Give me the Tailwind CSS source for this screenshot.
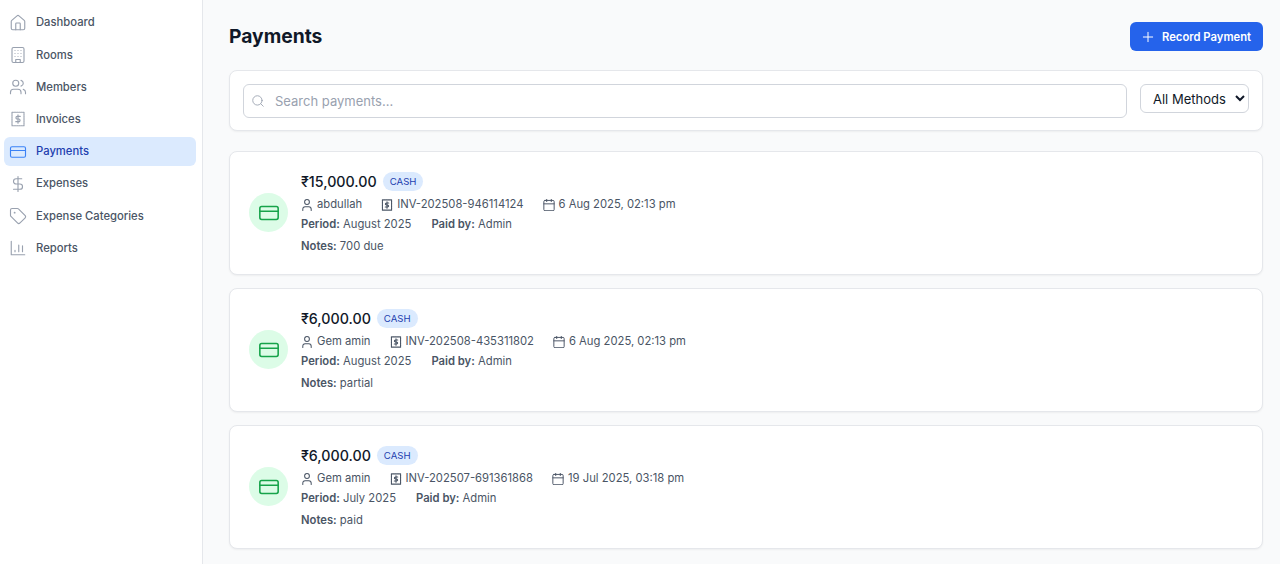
<!DOCTYPE html>
<html lang="en">
<head>
  <meta charset="UTF-8" />
  <title>Payments</title>
  <script src="https://cdn.jsdelivr.net/npm/@tailwindcss/browser@4"></script>
</head>
<body class="bg-[#f9fafb] font-['Inter',sans-serif] text-gray-900">
  <div class="flex h-[564px] overflow-hidden">
    <!-- Sidebar -->
    <aside class="w-[203px] shrink-0 bg-white border-r border-gray-200 pt-[8.4px] pl-1 pr-[6px]">
      <nav class="flex flex-col gap-[3.2px] text-[11.25px] font-medium text-gray-600">
        <a class="h-[29px] flex items-center gap-[9px] px-[5px] rounded-md">
          <svg class="w-[18px] h-[18px] text-gray-400" fill="none" stroke="currentColor" stroke-width="1.5" stroke-linecap="round" stroke-linejoin="round" viewBox="0 0 24 24"><path d="M15 21v-8a1 1 0 0 0-1-1h-4a1 1 0 0 0-1 1v8"/><path d="M3 10a2 2 0 0 1 .709-1.528l7-6a2 2 0 0 1 2.582 0l7 6A2 2 0 0 1 21 10v9a2 2 0 0 1-2 2H5a2 2 0 0 1-2-2z"/></svg>
          Dashboard
        </a>
        <a class="h-[29px] flex items-center gap-[9px] px-[5px] rounded-md">
          <svg class="w-[18px] h-[18px] text-gray-400" fill="none" stroke="currentColor" stroke-width="1.5" stroke-linecap="round" stroke-linejoin="round" viewBox="0 0 24 24"><rect x="4" y="2" width="16" height="20" rx="2"/><path d="M9 22v-4h6v4M8 6h.01M12 6h.01M16 6h.01M8 10h.01M12 10h.01M16 10h.01M8 14h.01M12 14h.01M16 14h.01"/></svg>
          Rooms
        </a>
        <a class="h-[29px] flex items-center gap-[9px] px-[5px] rounded-md">
          <svg class="w-[18px] h-[18px] text-gray-400" fill="none" stroke="currentColor" stroke-width="1.5" stroke-linecap="round" stroke-linejoin="round" viewBox="0 0 24 24"><path d="M16 21v-2a4 4 0 0 0-4-4H6a4 4 0 0 0-4 4v2"/><circle cx="9" cy="7" r="4"/><path d="M22 21v-2a4 4 0 0 0-3-3.87M16 3.13a4 4 0 0 1 0 7.75"/></svg>
          Members
        </a>
        <a class="h-[29px] flex items-center gap-[9px] px-[5px] rounded-md">
          <svg class="w-[18px] h-[18px] text-gray-400" fill="none" stroke="currentColor" stroke-width="1.5" stroke-linecap="round" stroke-linejoin="round" viewBox="0 0 24 24"><rect x="4" y="3" width="16" height="18" stroke-dasharray="2 1"/><path d="M15 8.5h-4a1.75 1.75 0 0 0 0 3.5h2a1.75 1.75 0 0 1 0 3.5H9M12 6.5v11"/></svg>
          Invoices
        </a>
        <a class="h-[29px] flex items-center gap-[9px] px-[5px] rounded-md bg-[#dbeafe] text-[#1e40af]">
          <svg class="w-[18px] h-[18px] text-[#3b82f6]" fill="none" stroke="currentColor" stroke-width="1.5" stroke-linecap="round" stroke-linejoin="round" viewBox="0 0 24 24"><rect x="2" y="5" width="20" height="14" rx="2"/><path d="M2 10h20"/></svg>
          Payments
        </a>
        <a class="h-[29px] flex items-center gap-[9px] px-[5px] rounded-md">
          <svg class="w-[18px] h-[18px] text-gray-400" fill="none" stroke="currentColor" stroke-width="1.5" stroke-linecap="round" stroke-linejoin="round" viewBox="0 0 24 24"><path d="M12 2v20M17 5H9.5a3.5 3.5 0 0 0 0 7h5a3.5 3.5 0 0 1 0 7H6"/></svg>
          Expenses
        </a>
        <a class="h-[29px] flex items-center gap-[9px] px-[5px] rounded-md">
          <svg class="w-[18px] h-[18px] text-gray-400" fill="none" stroke="currentColor" stroke-width="1.5" stroke-linecap="round" stroke-linejoin="round" viewBox="0 0 24 24"><path d="M12.586 2.586A2 2 0 0 0 11.172 2H4a2 2 0 0 0-2 2v7.172a2 2 0 0 0 .586 1.414l8.704 8.704a2.426 2.426 0 0 0 3.42 0l6.58-6.58a2.426 2.426 0 0 0 0-3.42z"/><circle cx="7.5" cy="7.5" r=".5"/></svg>
          Expense Categories
        </a>
        <a class="h-[29px] flex items-center gap-[9px] px-[5px] rounded-md">
          <svg class="w-[18px] h-[18px] text-gray-400" fill="none" stroke="currentColor" stroke-width="1.5" stroke-linecap="round" stroke-linejoin="round" viewBox="0 0 24 24"><path d="M3 3v18h18M8 17v-2M13 17V8M18 17V9"/></svg>
          Reports
        </a>
      </nav>
    </aside>

    <!-- Main -->
    <main class="flex-1 pl-[26px] pr-[17px] pt-[22px]">
      <div class="flex justify-between items-start h-[29px]">
        <h1 class="text-[19.25px] font-bold leading-[28px] text-gray-900">Payments</h1>
        <button class="h-[29px] w-[133px] pl-[10px] pt-[1px] bg-[#2563eb] text-white text-[11.25px] font-semibold rounded-md flex items-center gap-[6px]">
          <svg class="w-[16px] h-[16px]" fill="none" stroke="currentColor" stroke-width="1.5" stroke-linecap="round" viewBox="0 0 24 24"><path d="M12 5v14M5 12h14"/></svg>
          Record Payment
        </button>
      </div>

      <div class="mt-[19px] bg-white border border-gray-200 shadow-xs rounded-lg p-[13px] flex items-start gap-[13px] h-[61px]">
        <div class="flex-1 relative">
          <svg class="absolute left-[8px] top-[10px] w-[14px] h-[14px] text-gray-400" fill="none" stroke="currentColor" stroke-width="1.5" stroke-linecap="round" viewBox="0 0 24 24"><circle cx="11" cy="11" r="8"/><path d="m21 21-4.3-4.3"/></svg>
          <input class="w-full h-[34px] border border-gray-300 rounded-md pl-[31px] text-[13px] bg-white placeholder:text-gray-400" placeholder="Search payments..." />
        </div>
        <select class="h-[29px] w-[109px] border border-gray-300 rounded-md bg-white text-[13px] pl-2 text-gray-900">
          <option>All Methods</option>
        </select>
      </div>

      <div class="mt-[20px] flex flex-col gap-[13.5px]">
        <div class="h-[123.5px] bg-white border border-gray-200 shadow-xs rounded-lg px-[19px] flex items-center gap-[13px]">
          <div class="w-[39px] h-[39px] rounded-full bg-[#dcfce7] flex items-center justify-center">
            <svg class="w-[22px] h-[22px] text-[#16a34a]" fill="none" stroke="currentColor" stroke-width="1.7" stroke-linecap="round" stroke-linejoin="round" viewBox="0 0 24 24"><rect x="2" y="5" width="20" height="14" rx="2"/><path d="M2 10h20"/></svg>
          </div>
          <div class="text-[11.25px] text-gray-600 pt-[2px]">
            <div class="flex items-center gap-[6px] h-[20px]">
              <span class="text-[14.25px] font-medium text-gray-900">₹15,000.00</span>
              <span class="bg-[#dbeafe] text-[#1e40af] text-[9.6px] rounded-full px-[7px] h-[19px] flex items-center">CASH</span>
            </div>
            <div class="flex items-center gap-[19px] h-[22px] mt-[2px]">
              <span class="flex items-center gap-[4px]"><svg class="w-[12px] h-[12px]" fill="none" stroke="currentColor" stroke-width="1.7" stroke-linecap="round" stroke-linejoin="round" viewBox="2.5 2 19 20"><path d="M19 21v-2a4 4 0 0 0-4-4H9a4 4 0 0 0-4 4v2"/><circle cx="12" cy="7" r="4"/></svg>abdullah</span>
              <span class="flex items-center gap-[4px]"><svg class="w-[12px] h-[12px]" fill="none" stroke="currentColor" stroke-width="2" stroke-linecap="round" stroke-linejoin="round" viewBox="2 1.5 20 21"><rect x="4" y="3" width="16" height="18" stroke-dasharray="2 1"/><path d="M15 8.5h-4a1.75 1.75 0 0 0 0 3.5h2a1.75 1.75 0 0 1 0 3.5H9M12 6.5v11"/></svg>INV-202508-946114124</span>
              <span class="flex items-center gap-[4px]"><svg class="w-[12px] h-[12px]" fill="none" stroke="currentColor" stroke-width="1.7" stroke-linecap="round" stroke-linejoin="round" viewBox="2 1.5 20 21"><path d="M8 2v4M16 2v4"/><rect x="3" y="4" width="18" height="18" rx="2"/><path d="M3 10h18"/></svg>6 Aug 2025, 02:13 pm</span>
            </div>
            <div class="flex gap-[20px] h-[18px] items-center">
              <span><b class="font-semibold">Period:</b> August 2025</span>
              <span><b class="font-semibold">Paid by:</b> Admin</span>
            </div>
            <div class="mt-[4px] h-[18px] flex items-center"><span><b class="font-semibold">Notes:</b> 700 due</span></div>
          </div>
        </div>

        <div class="h-[123.5px] bg-white border border-gray-200 shadow-xs rounded-lg px-[19px] flex items-center gap-[13px]">
          <div class="w-[39px] h-[39px] rounded-full bg-[#dcfce7] flex items-center justify-center">
            <svg class="w-[22px] h-[22px] text-[#16a34a]" fill="none" stroke="currentColor" stroke-width="1.7" stroke-linecap="round" stroke-linejoin="round" viewBox="0 0 24 24"><rect x="2" y="5" width="20" height="14" rx="2"/><path d="M2 10h20"/></svg>
          </div>
          <div class="text-[11.25px] text-gray-600 pt-[2px]">
            <div class="flex items-center gap-[6px] h-[20px]">
              <span class="text-[14.25px] font-medium text-gray-900">₹6,000.00</span>
              <span class="bg-[#dbeafe] text-[#1e40af] text-[9.6px] rounded-full px-[7px] h-[19px] flex items-center">CASH</span>
            </div>
            <div class="flex items-center gap-[19px] h-[22px] mt-[2px]">
              <span class="flex items-center gap-[4px]"><svg class="w-[12px] h-[12px]" fill="none" stroke="currentColor" stroke-width="1.7" stroke-linecap="round" stroke-linejoin="round" viewBox="2.5 2 19 20"><path d="M19 21v-2a4 4 0 0 0-4-4H9a4 4 0 0 0-4 4v2"/><circle cx="12" cy="7" r="4"/></svg>Gem amin</span>
              <span class="flex items-center gap-[4px]"><svg class="w-[12px] h-[12px]" fill="none" stroke="currentColor" stroke-width="2" stroke-linecap="round" stroke-linejoin="round" viewBox="2 1.5 20 21"><rect x="4" y="3" width="16" height="18" stroke-dasharray="2 1"/><path d="M15 8.5h-4a1.75 1.75 0 0 0 0 3.5h2a1.75 1.75 0 0 1 0 3.5H9M12 6.5v11"/></svg>INV-202508-435311802</span>
              <span class="flex items-center gap-[4px]"><svg class="w-[12px] h-[12px]" fill="none" stroke="currentColor" stroke-width="1.7" stroke-linecap="round" stroke-linejoin="round" viewBox="2 1.5 20 21"><path d="M8 2v4M16 2v4"/><rect x="3" y="4" width="18" height="18" rx="2"/><path d="M3 10h18"/></svg>6 Aug 2025, 02:13 pm</span>
            </div>
            <div class="flex gap-[20px] h-[18px] items-center">
              <span><b class="font-semibold">Period:</b> August 2025</span>
              <span><b class="font-semibold">Paid by:</b> Admin</span>
            </div>
            <div class="mt-[4px] h-[18px] flex items-center"><span><b class="font-semibold">Notes:</b> partial</span></div>
          </div>
        </div>

        <div class="h-[123.5px] bg-white border border-gray-200 shadow-xs rounded-lg px-[19px] flex items-center gap-[13px]">
          <div class="w-[39px] h-[39px] rounded-full bg-[#dcfce7] flex items-center justify-center">
            <svg class="w-[22px] h-[22px] text-[#16a34a]" fill="none" stroke="currentColor" stroke-width="1.7" stroke-linecap="round" stroke-linejoin="round" viewBox="0 0 24 24"><rect x="2" y="5" width="20" height="14" rx="2"/><path d="M2 10h20"/></svg>
          </div>
          <div class="text-[11.25px] text-gray-600 pt-[2px]">
            <div class="flex items-center gap-[6px] h-[20px]">
              <span class="text-[14.25px] font-medium text-gray-900">₹6,000.00</span>
              <span class="bg-[#dbeafe] text-[#1e40af] text-[9.6px] rounded-full px-[7px] h-[19px] flex items-center">CASH</span>
            </div>
            <div class="flex items-center gap-[19px] h-[22px] mt-[2px]">
              <span class="flex items-center gap-[4px]"><svg class="w-[12px] h-[12px]" fill="none" stroke="currentColor" stroke-width="1.7" stroke-linecap="round" stroke-linejoin="round" viewBox="2.5 2 19 20"><path d="M19 21v-2a4 4 0 0 0-4-4H9a4 4 0 0 0-4 4v2"/><circle cx="12" cy="7" r="4"/></svg>Gem amin</span>
              <span class="flex items-center gap-[4px]"><svg class="w-[12px] h-[12px]" fill="none" stroke="currentColor" stroke-width="2" stroke-linecap="round" stroke-linejoin="round" viewBox="2 1.5 20 21"><rect x="4" y="3" width="16" height="18" stroke-dasharray="2 1"/><path d="M15 8.5h-4a1.75 1.75 0 0 0 0 3.5h2a1.75 1.75 0 0 1 0 3.5H9M12 6.5v11"/></svg>INV-202507-691361868</span>
              <span class="flex items-center gap-[4px]"><svg class="w-[12px] h-[12px]" fill="none" stroke="currentColor" stroke-width="1.7" stroke-linecap="round" stroke-linejoin="round" viewBox="2 1.5 20 21"><path d="M8 2v4M16 2v4"/><rect x="3" y="4" width="18" height="18" rx="2"/><path d="M3 10h18"/></svg>19 Jul 2025, 03:18 pm</span>
            </div>
            <div class="flex gap-[20px] h-[18px] items-center">
              <span><b class="font-semibold">Period:</b> July 2025</span>
              <span><b class="font-semibold">Paid by:</b> Admin</span>
            </div>
            <div class="mt-[4px] h-[18px] flex items-center"><span><b class="font-semibold">Notes:</b> paid</span></div>
          </div>
        </div>
      </div>
    </main>
  </div>
</body>
</html>
